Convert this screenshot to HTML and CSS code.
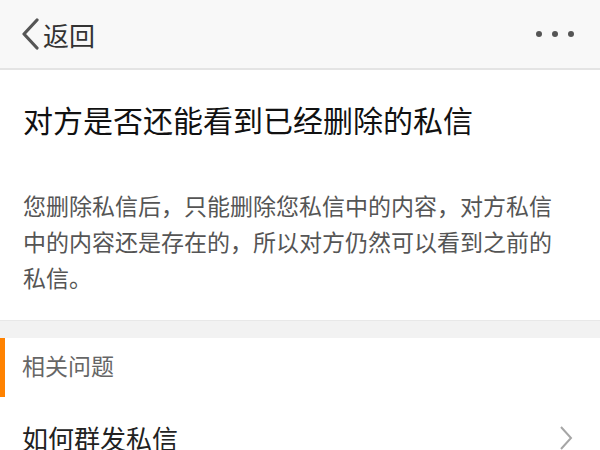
FILE: index.html
```html
<!DOCTYPE html>
<html lang="zh-CN">
<head>
    <meta charset="UTF-8">
    <meta name="viewport" content="width=device-width, initial-scale=1.0">
    <title>帮助</title>
    <link rel="stylesheet" href="styles.css">
</head>
<body>
    <div class="header">
        <a class="back" href="#">
            <svg class="back-icon" width="20" height="32" viewBox="0 0 20 32">
                <path d="M17 2 L4 16 L17 30" fill="none" stroke="#555" stroke-width="3.2" stroke-linecap="round" stroke-linejoin="round"/>
            </svg>
            <span>返回</span>
        </a>
        <div class="more">
            <span class="dot"></span>
            <span class="dot"></span>
            <span class="dot"></span>
        </div>
    </div>

    <div class="article">
        <h1>对方是否还能看到已经删除的私信</h1>
        <p>您删除私信后，只能删除您私信中的内容，对方私信中的内容还是存在的，所以对方仍然可以看到之前的私信。</p>
    </div>

    <div class="gap"></div>

    <div class="related">
        <div class="related-title">相关问题</div>
        <a class="related-item" href="#">
            <span>如何群发私信</span>
            <svg class="arrow" width="16" height="28" viewBox="0 0 16 28">
                <path d="M3 3 L13 14 L3 25" fill="none" stroke="#a6a6a6" stroke-width="2"/>
            </svg>
        </a>
    </div>
</body>
</html>
```

FILE: styles.css
```css
body {
    margin: 0;
    font-family: "Noto Sans CJK SC", "Noto Sans", sans-serif;
    background: #ffffff;
    color: #222;
    overflow: hidden;
}
a {
    text-decoration: none;
    color: inherit;
}
.header {
    height: 68px;
    background: #f8f8f8;
    border-bottom: 2px solid #e4e4e4;
    display: flex;
    align-items: center;
    justify-content: space-between;
    padding: 0 22px 0 20px;
}
.back {
    display: flex;
    align-items: center;
    font-size: 26px;
    color: #333;
}
.back-icon {
    margin-right: 3px;
}
.more {
    display: flex;
    gap: 10px;
    padding-right: 4px;
}
.dot {
    width: 6px;
    height: 6px;
    border-radius: 50%;
    background: #555;
}
.article {
    padding: 31px 30px 25px 23px;
}
.article h1 {
    margin: 0;
    font-size: 30px;
    font-weight: normal;
    line-height: 36px;
    color: #111;
}
.article p {
    margin: 50px 0 0;
    font-size: 23px;
    line-height: 36px;
    color: #555;
}
.gap {
    height: 17px;
    background: #f2f2f2;
    border-top: 1px solid #e8e8e8;
}
.related-title {
    height: 54px;
    padding-bottom: 5px;
    border-left: 5px solid #ff8200;
    padding-left: 17px;
    display: flex;
    align-items: center;
    font-size: 23px;
    color: #666;
}
.related-item {
    display: flex;
    align-items: center;
    justify-content: space-between;
    padding: 23px 26px 0 22px;
    font-size: 26px;
    line-height: 36px;
    color: #222;
}
```
